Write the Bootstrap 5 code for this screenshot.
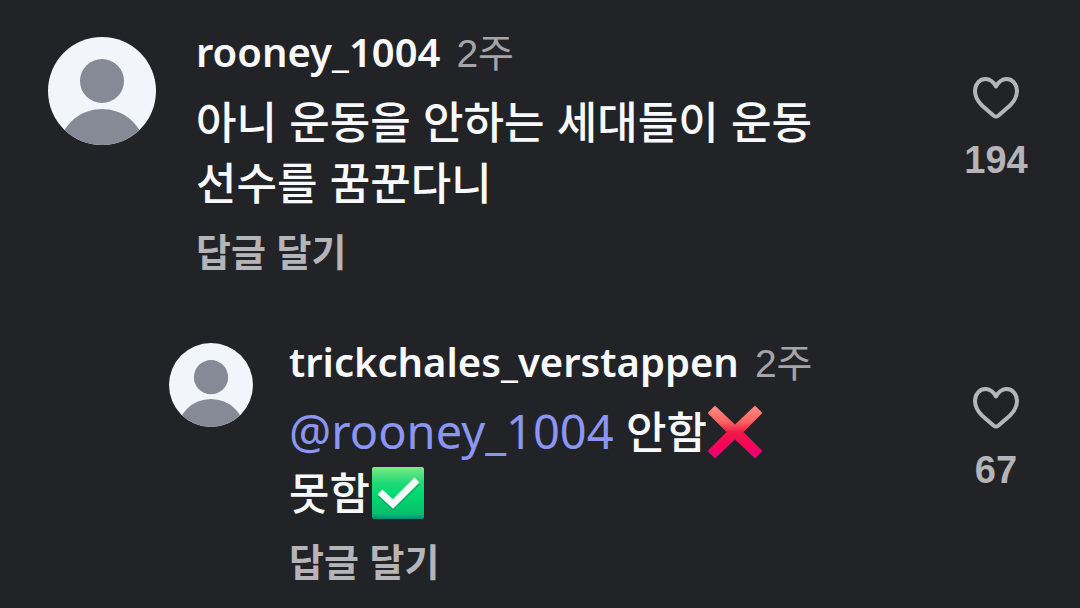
<!DOCTYPE html>
<html lang="ko">
<head>
<meta charset="utf-8">
<meta name="viewport" content="width=device-width, initial-scale=1">
<title>댓글</title>
<link href="https://cdn.jsdelivr.net/npm/bootstrap@5.3.0/dist/css/bootstrap.min.css" rel="stylesheet">
<style>
  body { background: #222327; color: #f8f9fb; font-family: "Noto Sans", "Noto Sans CJK KR", sans-serif; }
  .thread { padding: 28px 40px 20px 48px; gap: 64px; }
  .comment { gap: 40px; }
  .comment-reply { gap: 36px; padding-left: 121px; }
  .avatar { width: 108px; height: 108px; margin-top: 9px; }
  .comment-reply .avatar { width: 84px; height: 84px; margin-top: 5px; }
  .comment-head { gap: 16px; height: 48px; line-height: 48px; }
  .user-name { font-size: 40px; font-weight: 600; color: inherit; }
  .comment-time { font-family: "Liberation Sans", "Noto Sans CJK KR", sans-serif; font-size: 39px; color: #a5a5a9; }
  .comment-text { font: 500 44px/61px "Noto Sans CJK KR", sans-serif; margin: 14px 0 14px; }
  .mention { font: 400 47px/48px "Noto Sans", sans-serif; color: #8b96f3; }
  .emoji { width: 54px; height: 54px; margin: -4px 0 -4px 1px; vertical-align: -6px; }
  .reply-btn { font: 700 38px/48px "Noto Sans CJK KR", sans-serif; color: #b5b5b9; }
  .like-btn { width: 88px; margin-top: 48px; gap: 16px; color: #b5b5b9; font: 700 38px/48px "Liberation Sans", sans-serif; }
  .like-btn svg { width: 48px; height: 44px; }
</style>
</head>
<body>
<svg class="d-none" aria-hidden="true">
  <symbol id="person" viewBox="0 0 108 108">
    <path fill="#f2f5f9" d="M0 0h108v108H0z"/>
    <g fill="#858a96"><circle cx="54" cy="44" r="22"/><circle cx="54" cy="116" r="44"/></g>
  </symbol>
  <symbol id="heart" viewBox="0 0 48 44">
    <path fill="none" stroke="currentColor" stroke-width="4" stroke-linejoin="round" d="M24 10.500C21.500 6 18 3 13.500 3C7 3 3 9 3 15C3 21.500 6 25.500 10 29.500C14.500 33.500 18 36.500 21.500 39.500Q24 41.500 26.500 39.500C30 36.500 33.500 33.500 38 29.500C42 25.500 45 21.500 45 15C45 9 41 3 34.500 3C30 3 26.500 6 24 10.500Z"/>
  </symbol>
</svg>

<main class="thread d-flex flex-column">
  <article class="comment d-flex align-items-start">
    <svg class="avatar rounded-circle flex-shrink-0" role="img" aria-label="프로필"><use href="#person"/></svg>
    <div class="flex-grow-1">
      <div class="comment-head d-flex align-items-baseline">
        <a class="user-name text-decoration-none" href="#">rooney_1004</a>
        <time class="comment-time">2주</time>
      </div>
      <p class="comment-text">아니 운동을 안하는 세대들이 운동<br>선수를 꿈꾼다니</p>
      <button type="button" class="reply-btn btn p-0 border-0 d-block">답글 달기</button>
    </div>
    <button type="button" class="like-btn btn p-0 border-0 d-flex flex-column align-items-center flex-shrink-0">
      <svg aria-hidden="true"><use href="#heart"/></svg>
      <span>194</span>
    </button>
  </article>

  <article class="comment comment-reply d-flex align-items-start">
    <svg class="avatar rounded-circle flex-shrink-0" role="img" aria-label="프로필"><use href="#person"/></svg>
    <div class="flex-grow-1">
      <div class="comment-head d-flex align-items-baseline">
        <a class="user-name text-decoration-none" href="#">trickchales_verstappen</a>
        <time class="comment-time">2주</time>
      </div>
      <p class="comment-text"><a class="mention text-decoration-none" href="#">@rooney_1004</a> 안함<svg class="emoji" viewBox="0 0 54 54" role="img" aria-label="X"><defs><linearGradient id="red" x1="0" y1="0" x2="0" y2="1"><stop offset="0" stop-color="#ff8a80"/><stop offset=".3" stop-color="#fb625f"/><stop offset=".5" stop-color="#f01a48"/><stop offset=".8" stop-color="#f6005c"/><stop offset="1" stop-color="#e3087a"/></linearGradient></defs><path fill="url(#red)" stroke="url(#red)" stroke-width="2" stroke-linejoin="round" d="M7 2L27 21L47 2L53 8L34 27L53 46L47 52L27 33L7 52L1 46L20 27L1 8Z"/></svg><br>못함<svg class="emoji" viewBox="0 0 54 54" role="img" aria-label="체크"><defs><linearGradient id="green" x1="0" y1="0" x2="0" y2="1"><stop offset="0" stop-color="#7cec82"/><stop offset=".3" stop-color="#22d978"/><stop offset=".5" stop-color="#00dc70"/><stop offset=".9" stop-color="#08bf6c"/><stop offset="1" stop-color="#008d82"/></linearGradient></defs><rect x="1" y="1" width="52" height="52" rx="2" fill="url(#green)"/><path fill="none" stroke="#078f5b" stroke-opacity=".5" stroke-width="7" d="M9 28L22 40L47 16"/><path fill="none" stroke="#f5fbf7" stroke-width="7" d="M9 26L22 38L46 14"/></svg></p>
      <button type="button" class="reply-btn btn p-0 border-0 d-block">답글 달기</button>
    </div>
    <button type="button" class="like-btn btn p-0 border-0 d-flex flex-column align-items-center flex-shrink-0">
      <svg aria-hidden="true"><use href="#heart"/></svg>
      <span>67</span>
    </button>
  </article>
</main>
<script src="https://cdn.jsdelivr.net/npm/bootstrap@5.3.0/dist/js/bootstrap.bundle.min.js"></script>
</body>
</html>
